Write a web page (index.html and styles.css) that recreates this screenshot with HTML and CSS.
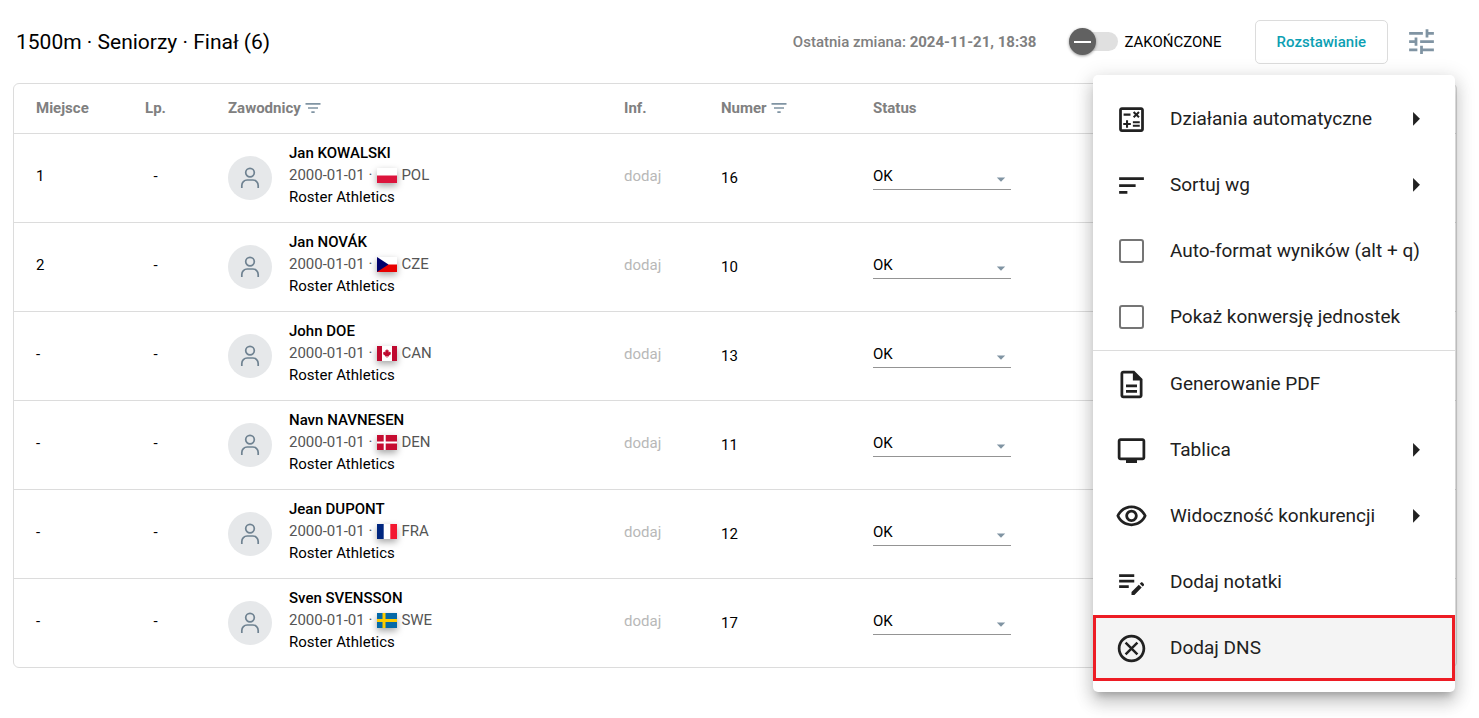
FILE: index.html
```html
<!DOCTYPE html>
<html lang="pl">
<head>
<meta charset="utf-8">
<title>1500m · Seniorzy · Finał</title>
<meta name="viewport" content="width=device-width, initial-scale=1">
<link rel="stylesheet" href="styles.css">
</head>
<body>
<svg class="sprite" aria-hidden="true">
  <symbol id="person" viewBox="0 0 20 22"><circle cx="10" cy="5.6" r="4.3"/><path d="M1.800 21v-2.600c0-3 2.400-5.400 5.400-5.400h5.600c3 0 5.400 2.400 5.400 5.400V21"/></symbol>
  <symbol id="filter" viewBox="0 0 24 24"><path d="M10 18h4v-2h-4v2zM3 6v2h18V6H3zm3 7h12v-2H6v2z"/></symbol>
  <symbol id="caret" viewBox="0 0 24 24"><path d="M7 9l5 5 5-5z"/></symbol>
  <symbol id="arrow" viewBox="0 0 24 24"><path d="M9.500 16.500l5-5-5-5z"/></symbol>
</svg>

<header class="topbar">
  <h1 class="title">1500m · Seniorzy · Finał (6)</h1>
  <p class="changed">Ostatnia zmiana: <b>2024-11-21, 18:38</b></p>
  <label class="toggle"><input class="toggle-input" type="checkbox"> ZAKOŃCZONE</label>
  <button class="seeding" type="button">Rozstawianie</button>
  <button class="tune" type="button" aria-label="Opcje" aria-expanded="true">
    <svg class="icon" viewBox="0 0 24 24"><path d="M3 17v2h6v-2H3zM3 5v2h10V5H3zm10 16v-2h8v-2h-8v-2h-2v6h2zM7 9v2H3v2h4v2h2V9H7zm14 4v-2H11v2h10zm-6-4h2V7h4V5h-4V3h-2v6z"/></svg>
  </button>
</header>

<main class="panel">
  <table class="results">
    <colgroup><col class="col-place"><col class="col-order"><col class="col-athlete"><col class="col-info"><col class="col-number"><col></colgroup>
    <thead>
      <tr>
        <th>Miejsce</th><th class="order">Lp.</th>
        <th><span class="head">Zawodnicy <svg class="filter"><use href="#filter"/></svg></span></th>
        <th>Inf.</th>
        <th><span class="head">Numer <svg class="filter"><use href="#filter"/></svg></span></th>
        <th>Status</th>
      </tr>
    </thead>
    <tbody>
      <tr>
        <td>1</td><td class="order">-</td>
        <td class="full"><div class="athlete"><span class="avatar"><svg class="person"><use href="#person"/></svg></span>
          <div class="details"><strong class="name">Jan KOWALSKI</strong>
            <span class="born">2000-01-01 · <svg class="flag" viewBox="0 0 20 15"><path fill="#fff" d="M0 0h20v15H0z"/><path fill="#dc143c" d="M0 7.500h20V15H0z"/></svg> POL</span>
            <span>Roster Athletics</span></div></div></td>
        <td class="info">dodaj</td><td class="full">16</td>
        <td><span class="status"><select class="select" aria-label="Status: Jan KOWALSKI"><option>OK</option></select><svg class="caret"><use href="#caret"/></svg></span></td>
      </tr>
      <tr>
        <td>2</td><td class="order">-</td>
        <td class="full"><div class="athlete"><span class="avatar"><svg class="person"><use href="#person"/></svg></span>
          <div class="details"><strong class="name">Jan NOVÁK</strong>
            <span class="born">2000-01-01 · <svg class="flag" viewBox="0 0 20 15"><path fill="#fff" d="M0 0h20v15H0z"/><path fill="#e80000" d="M0 7.500h20V15H0z"/><path fill="#00006c" d="M0 0l11.500 7.500L0 15z"/></svg> CZE</span>
            <span>Roster Athletics</span></div></div></td>
        <td class="info">dodaj</td><td class="full">10</td>
        <td><span class="status"><select class="select" aria-label="Status: Jan NOVÁK"><option>OK</option></select><svg class="caret"><use href="#caret"/></svg></span></td>
      </tr>
      <tr>
        <td>-</td><td class="order">-</td>
        <td class="full"><div class="athlete"><span class="avatar"><svg class="person"><use href="#person"/></svg></span>
          <div class="details"><strong class="name">John DOE</strong>
            <span class="born">2000-01-01 · <svg class="flag" viewBox="0 0 20 15"><path fill="#fff" d="M0 0h20v15H0z"/><path fill="#bf0a30" d="M0 0h5v15H0zM15 0h5v15h-5zM10 3l.9 1.600.9-.4-.3 2.200 1-.9.4.8 1.100-.1-.4 1.300.5.400-2.300 1.800.2.900-1.700-.3v1.700h-.6v-1.700L8 10.600l.2-.9-2.300-1.800.5-.4L6 6.200l1.100.1.4-.8 1 .9-.3-2.200.9.400z"/></svg> CAN</span>
            <span>Roster Athletics</span></div></div></td>
        <td class="info">dodaj</td><td class="full">13</td>
        <td><span class="status"><select class="select" aria-label="Status: John DOE"><option>OK</option></select><svg class="caret"><use href="#caret"/></svg></span></td>
      </tr>
      <tr>
        <td>-</td><td class="order">-</td>
        <td class="full"><div class="athlete"><span class="avatar"><svg class="person"><use href="#person"/></svg></span>
          <div class="details"><strong class="name">Navn NAVNESEN</strong>
            <span class="born">2000-01-01 · <svg class="flag" viewBox="0 0 20 15"><path fill="#c60c30" d="M0 0h20v15H0z"/><path fill="#fff" d="M6.700 0h2v15h-2zM0 6.500h20v2H0z"/></svg> DEN</span>
            <span>Roster Athletics</span></div></div></td>
        <td class="info">dodaj</td><td class="full">11</td>
        <td><span class="status"><select class="select" aria-label="Status: Navn NAVNESEN"><option>OK</option></select><svg class="caret"><use href="#caret"/></svg></span></td>
      </tr>
      <tr>
        <td>-</td><td class="order">-</td>
        <td class="full"><div class="athlete"><span class="avatar"><svg class="person"><use href="#person"/></svg></span>
          <div class="details"><strong class="name">Jean DUPONT</strong>
            <span class="born">2000-01-01 · <svg class="flag" viewBox="0 0 20 15"><path fill="#fff" d="M0 0h20v15H0z"/><path fill="#00267f" d="M0 0h6.700v15H0z"/><path fill="#f31830" d="M13.300 0H20v15h-6.700z"/></svg> FRA</span>
            <span>Roster Athletics</span></div></div></td>
        <td class="info">dodaj</td><td class="full">12</td>
        <td><span class="status"><select class="select" aria-label="Status: Jean DUPONT"><option>OK</option></select><svg class="caret"><use href="#caret"/></svg></span></td>
      </tr>
      <tr>
        <td>-</td><td class="order">-</td>
        <td class="full"><div class="athlete"><span class="avatar"><svg class="person"><use href="#person"/></svg></span>
          <div class="details"><strong class="name">Sven SVENSSON</strong>
            <span class="born">2000-01-01 · <svg class="flag" viewBox="0 0 20 15"><path fill="#066aa7" d="M0 0h20v15H0z"/><path fill="#fecc00" d="M5.500 0h3v15h-3zM0 6h20v3H0z"/></svg> SWE</span>
            <span>Roster Athletics</span></div></div></td>
        <td class="info">dodaj</td><td class="full">17</td>
        <td><span class="status"><select class="select" aria-label="Status: Sven SVENSSON"><option>OK</option></select><svg class="caret"><use href="#caret"/></svg></span></td>
      </tr>
    </tbody>
  </table>
</main>

<nav class="menu" aria-label="Opcje konkurencji">
  <button class="item" type="button"><svg class="icon" viewBox="0 0 24 24"><path d="M19 3H5c-1.100 0-2 .9-2 2v14c0 1.100.9 2 2 2h14c1.100 0 2-.9 2-2V5c0-1.100-.9-2-2-2zm0 16H5V5h14v14z"/><path d="M6.250 7.720h5v1.500h-5zM13 15.750h5v1.500h-5zM13 13.250h5v1.500h-5zM8 18h1.500v-2h2v-1.500h-2v-2H8v2H6V16h2zM14.090 10.950l1.410-1.410 1.410 1.410 1.060-1.060-1.410-1.420 1.410-1.410L16.910 6 15.500 7.410 14.090 6l-1.060 1.060 1.410 1.410-1.410 1.420z"/></svg><span class="text">Działania automatyczne</span><svg class="icon"><use href="#arrow"/></svg></button>
  <button class="item" type="button"><svg class="icon" viewBox="0 0 24 24"><path d="M3 18h6v-2H3v2zM3 6v2h18V6H3zm0 7h12v-2H3v2z"/></svg><span class="text">Sortuj wg</span><svg class="icon"><use href="#arrow"/></svg></button>
  <label class="item item-check"><input class="check" type="checkbox"><span class="text">Auto-format wyników (alt + q)</span></label>
  <label class="item item-check"><input class="check" type="checkbox"><span class="text">Pokaż konwersję jednostek</span></label>
  <hr class="divider">
  <button class="item" type="button"><svg class="icon" viewBox="0 0 24 24"><path d="M8 16h8v2H8zm0-4h8v2H8zm6-10H6c-1.100 0-2 .9-2 2v16c0 1.100.89 2 1.990 2H18c1.100 0 2-.9 2-2V8l-6-6zm4 18H6V4h7v5h5v11z"/></svg><span class="text">Generowanie PDF</span></button>
  <button class="item" type="button"><svg class="icon" viewBox="0 0 24 24"><path d="M20 3H4c-1.100 0-2 .9-2 2v12c0 1.100.9 2 2 2h4v2h8v-2h4c1.100 0 2-.9 2-2V5c0-1.100-.9-2-2-2zm0 14H4V5h16v12z"/></svg><span class="text">Tablica</span><svg class="icon"><use href="#arrow"/></svg></button>
  <button class="item" type="button"><svg class="icon" viewBox="0 0 24 24"><path d="M12 6c3.790 0 7.170 2.130 8.820 5.500C19.170 14.870 15.790 17 12 17s-7.170-2.130-8.820-5.500C4.830 8.130 8.210 6 12 6m0-2C7 4 2.730 7.110 1 11.500 2.730 15.890 7 19 12 19s9.270-3.110 11-7.500C21.270 7.110 17 4 12 4zm0 5c1.380 0 2.500 1.120 2.500 2.500S13.380 14 12 14s-2.500-1.120-2.500-2.500S10.620 9 12 9m0-2c-2.480 0-4.500 2.020-4.500 4.500S9.520 16 12 16s4.500-2.020 4.500-4.500S14.480 7 12 7z"/></svg><span class="text">Widoczność konkurencji</span><svg class="icon"><use href="#arrow"/></svg></button>
  <button class="item" type="button"><svg class="icon" viewBox="0 0 24 24"><path d="M3 10h11v2H3v-2zm0-2h11V6H3v2zm0 8h7v-2H3v2zm15.010-3.130.71-.71c.39-.39 1.020-.39 1.410 0l.71.71c.39.39.39 1.020 0 1.410l-.71.71-2.120-2.120zm-.71.71-5.300 5.300V21h2.120l5.300-5.300-2.120-2.120z"/></svg><span class="text">Dodaj notatki</span></button>
  <button class="item item-active" type="button"><svg class="icon" viewBox="0 0 24 24"><path d="M12 2C6.470 2 2 6.470 2 12s4.470 10 10 10 10-4.470 10-10S17.530 2 12 2zm0 18c-4.410 0-8-3.590-8-8s3.590-8 8-8 8 3.590 8 8-3.590 8-8 8z"/><path d="M7.700 7.700l8.600 8.600M16.300 7.700l-8.600 8.600" stroke="currentColor" stroke-width="1.800"/></svg><span class="text">Dodaj DNS</span></button>
</nav>
</body>
</html>
```
FILE: styles.css
```css
* { box-sizing: border-box; }

body {
  position: relative;
  min-height: 100vh;
  margin: 0;
  padding: 0 22px 24px 13px;
  background: #fff;
  color: #000;
  font-family: Roboto, "Liberation Sans", sans-serif;
  font-size: 15px;
  line-height: 22px;
}

button, select, input { font: inherit; color: inherit; }
svg { flex: none; fill: currentColor; }

.sprite { position: absolute; width: 0; height: 0; }
.icon { width: 33px; height: 33px; }

/* Top bar */
.topbar {
  display: flex;
  align-items: center;
  min-height: 83px;
  padding: 0 19px 0 3px;
}
.title { flex: 1; margin: 0; font-size: 21px; font-weight: 400; line-height: 28px; }
.changed { margin: 0 33px 0 0; color: #808080; font-weight: 500; }
.changed b { font-weight: 700; }

.toggle { display: flex; align-items: center; gap: 6px; margin-right: 33px; }
.toggle-input {
  position: relative;
  width: 49px;
  height: 27px;
  margin: 0;
  appearance: none;
}
.toggle-input::before {
  content: "";
  position: absolute;
  inset: 4px 0 4px 8px;
  border-radius: 10px;
  background: #e0e0e0;
}
.toggle-input::after {
  content: "";
  position: absolute;
  inset: 0 auto 0 0;
  width: 27px;
  border-radius: 50%;
  background: linear-gradient(#fff, #fff) center / 17px 2px no-repeat #616161;
  box-shadow: 0 1px 3px rgba(0, 0, 0, .4);
}

.seeding {
  height: 44px;
  margin-right: 17px;
  padding: 0 21px;
  border: 1px solid #dcdcdc;
  border-radius: 5px;
  background: #fff;
  color: #0c9fb3;
  font-weight: 500;
}
.tune { display: flex; padding: 0; border: 0; background: none; color: #8094a3; }

/* Results table */
.panel { border: 1px solid #dcdcdc; border-radius: 6px; }
.results { width: 100%; border-spacing: 0; table-layout: fixed; }
.col-place { width: 91px; }
.col-order { width: 101px; }
.col-athlete { width: 396px; }
.col-info { width: 97px; }
.col-number { width: 152px; }

th, td { padding: 0 0 0 22px; text-align: left; border-bottom: 1px solid #dcdcdc; }
th { height: 50px; padding-bottom: 2px; color: #808080; font-weight: 700; }
td { padding-bottom: 4px; }
tr:last-child td { border-bottom: 0; }
thead tr:last-child th { border-bottom: 1px solid #dcdcdc; }
.order { padding-left: 0; text-align: center; }
.full { padding-bottom: 0; }
.info { color: #b8b8b8; }

.head { display: flex; align-items: center; gap: 2px; }
.filter { width: 20px; height: 20px; color: #8094a3; }

.athlete { display: flex; align-items: center; gap: 17px; padding: 8px 0; }
.avatar {
  display: grid;
  place-items: center;
  width: 44px;
  height: 44px;
  border-radius: 50%;
  background: #e6e8ea;
}
.person { width: 20px; height: 22px; fill: none; stroke: #6f8291; stroke-width: 1.7; }
.details { display: flex; flex-direction: column; padding-bottom: 6px; }
.name { font-weight: 500; }
.born { display: flex; align-items: center; color: #555; }
.flag { width: 20px; height: 15px; margin: 0 4px 0 5px; box-shadow: 0 3px 7px rgba(0, 0, 0, .35); }

.status { display: grid; align-items: end; width: 138px; }
.select, .caret { grid-area: 1 / 1; }
.select {
  height: 28px;
  padding: 0;
  border: 0;
  border-bottom: 1px solid #949494;
  border-radius: 0;
  background: none;
  appearance: none;
}
.caret { justify-self: end; width: 20px; height: 20px; color: #8094a3; pointer-events: none; }

/* Options menu, floating over the table */
.menu {
  position: absolute;
  top: 75px;
  right: 24px;
  width: 362px;
  padding: 11px 0;
  border-radius: 5px;
  background: #fff;
  color: #212121;
  box-shadow: 0 7px 7px -4px rgba(0, 0, 0, .2), 0 11px 17px 1px rgba(0, 0, 0, .14), 0 4px 19px 3px rgba(0, 0, 0, .12);
}
.item {
  display: flex;
  align-items: center;
  gap: 22px;
  width: 100%;
  height: 66px;
  padding: 0 22px;
  border: 0;
  background: none;
  font-size: 19px;
  line-height: 24px;
  text-align: left;
}
.text { flex: 1; white-space: nowrap; }
.item-check { padding-bottom: 1px; }
.item-active { padding: 0 19px; border: 3px solid #ed1c24; background: #f4f4f4; }
.check {
  width: 25px;
  height: 24px;
  margin: 0 4px;
  border: 2px solid #757575;
  border-radius: 3px;
  background: #fff;
  appearance: none;
}
.divider { height: 1px; margin: 0; border: 0; background: #dcdcdc; }
```
